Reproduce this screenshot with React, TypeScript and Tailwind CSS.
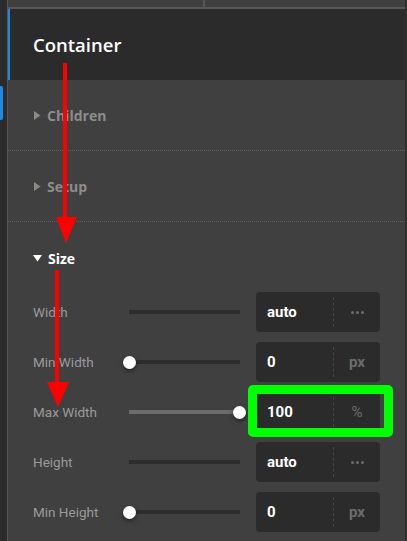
import React from 'react'

type Row = {
  label: string
  value: string
  unit: string
  thumb: 'none' | 'start' | 'end'
}

const rows: Row[] = [
  { label: 'Width', value: 'auto', unit: 'dots', thumb: 'none' },
  { label: 'Min Width', value: '0', unit: 'px', thumb: 'start' },
  { label: 'Max Width', value: '100', unit: '%', thumb: 'end' },
  { label: 'Height', value: 'auto', unit: 'dots', thumb: 'none' },
  { label: 'Min Height', value: '0', unit: 'px', thumb: 'start' },
]

function Caret({ open, light }: { open?: boolean; light?: boolean }) {
  const color = light ? '#ffffff' : '#8a8a8a'
  return open ? (
    <svg width="9" height="8" viewBox="0 0 9 8" className="shrink-0">
      <polygon points="0,1 9,1 4.5,7.5" fill={color} />
    </svg>
  ) : (
    <svg width="8" height="9" viewBox="0 0 8 9" className="shrink-0">
      <polygon points="1,0 7.5,4.5 1,9" fill={color} />
    </svg>
  )
}

function Section({ title }: { title: string }) {
  return (
    <div className="h-[71px] flex items-center pl-[25px] gap-[6px] border-b border-dotted border-[#5f5f5f]">
      <Caret />
      <span className="text-[14px] font-bold text-[#8c8c8c]">{title}</span>
    </div>
  )
}

function Slider({ thumb }: { thumb: Row['thumb'] }) {
  return (
    <div className="relative w-[111px] h-[13px] flex items-center">
      <div className={`w-full h-[4px] ${thumb === 'end' ? 'bg-[#6b6b6b]' : 'bg-[#2c2c2c]'}`} />
      {thumb === 'start' && (
        <div className="absolute left-[-6px] top-0 w-[13px] h-[13px] rounded-full bg-white shadow-[0_2px_4px_rgba(0,0,0,0.5)]" />
      )}
      {thumb === 'end' && (
        <div className="absolute right-[-6px] top-0 w-[13px] h-[13px] rounded-full bg-white shadow-[0_2px_4px_rgba(0,0,0,0.5)]" />
      )}
    </div>
  )
}

function SizeRow({ row }: { row: Row }) {
  return (
    <div className="h-[40px] flex items-center pl-[25px]">
      <span className="w-[96px] text-[13.5px] text-[#9a9a9a] font-['Roboto',sans-serif]">{row.label}</span>
      <Slider thumb={row.thumb} />
      <div className="ml-[16px] w-[124px] h-[40px] bg-[#2b2b2b] rounded-[4px] flex items-center">
        <span className="flex-1 pl-[11px] text-[15px] font-bold text-white font-['Roboto',sans-serif]">{row.value}</span>
        <div className="h-[30px] border-l border-dashed border-[#444]" />
        <div className="w-[46px] flex items-center justify-center text-[15px] text-[#6b6b6b] font-['Roboto',sans-serif]">
          {row.unit === 'dots' ? (
            <span className="flex gap-[2px]">
              <span className="w-[3px] h-[3px] rounded-full bg-[#6b6b6b]" />
              <span className="w-[3px] h-[3px] rounded-full bg-[#6b6b6b]" />
              <span className="w-[3px] h-[3px] rounded-full bg-[#6b6b6b]" />
            </span>
          ) : (
            <span className={row.unit === 'px' ? 'font-bold' : ''}>{row.unit}</span>
          )}
        </div>
      </div>
    </div>
  )
}

export default function App() {
  return (
    <div className="relative w-[407px] h-[541px] overflow-hidden flex bg-[#2b2b2b] font-['Open_Sans',sans-serif]">
      {/* left rail */}
      <div className="w-[7px] shrink-0 bg-[#2b2b2b] pt-[86px]">
        <div className="w-[3px] h-[34px] bg-[#1e88e5] rounded-r-[2px]" />
      </div>
      <div className="w-[1px] shrink-0 bg-[#555]" />

      <div className="flex-1 flex flex-col bg-[#404040]">
        {/* top bar */}
        <div className="h-[7px] flex bg-[#3f3f3f] border-b-2 border-[#575757] box-content">
          <div className="w-[197px] border-r-2 border-[#555]" />
        </div>

        {/* header */}
        <div className="h-[71px] bg-[#2b2b2b] border-l-2 border-[#1e88e5] flex items-center pl-[23px]">
          <span className="text-[18.5px] font-semibold text-white pt-[1px]">Container</span>
        </div>

        <Section title="Children" />
        <Section title="Setup" />

        <div className="h-[70px] flex items-center pl-[25px] pt-[2px] gap-[6px]">
          <Caret open light />
          <span className="text-[14px] font-bold text-white">Size</span>
        </div>

        <div className="flex flex-col gap-[10px]">
          {rows.map((r) => (
            <SizeRow key={r.label} row={r} />
          ))}
        </div>
      </div>
      <div className="w-[2px] shrink-0 bg-[#2f2f2f]" />

      {/* annotations */}
      <div className="absolute left-[248px] top-[385px] w-[145px] h-[52px] border-[9px] border-[#00ff00] rounded-[5px] pointer-events-none" />
      <svg className="absolute left-0 top-0 pointer-events-none" width="407" height="541" viewBox="0 0 407 541">
        <rect x="63" y="63" width="4" height="160" fill="#ff0000" />
        <polygon points="56,217 77,217 66,243" fill="#ff0000" />
        <rect x="55" y="270" width="4" height="116" fill="#ff0000" />
        <polygon points="47,382 69,382 58,407" fill="#ff0000" />
      </svg>
    </div>
  )
}
